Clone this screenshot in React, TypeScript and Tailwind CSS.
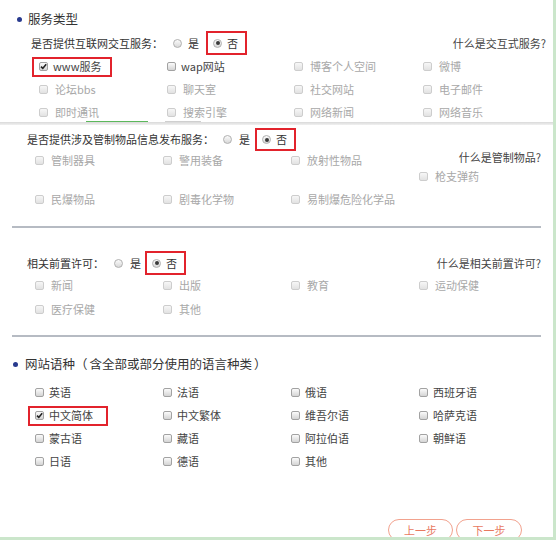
import * as React from "react";

type Item = { label: string; enabled?: boolean; checked?: boolean; boxed?: boolean };

function CheckBox({ enabled, checked }: { enabled?: boolean; checked?: boolean }) {
  return (
    <span
      className={
        enabled
          ? "relative inline-block w-[9px] h-[9px] shrink-0 rounded-[2px] border border-[#a2a2a2] bg-gradient-to-b from-[#fbfbfb] to-[#d4d4d4]"
          : "relative inline-block w-[9px] h-[9px] shrink-0 rounded-[2px] border border-[#cdcdcd] bg-gradient-to-b from-[#f7f7f7] to-[#e2e2e2]"
      }
    >
      {checked && (
        <svg viewBox="0 0 9 9" className="absolute left-[-1px] top-[-1px] w-[9px] h-[9px]">
          <path d="M2 4.6 L3.8 6.4 L7.2 2.2" fill="none" stroke="#222" strokeWidth="1.6" />
        </svg>
      )}
    </span>
  );
}

function Radio({ checked }: { checked?: boolean }) {
  return (
    <span className="relative inline-flex items-center justify-center w-[9px] h-[9px] shrink-0 rounded-full border border-[#b0b0b0] bg-gradient-to-b from-[#fbfbfb] to-[#d8d8d8]">
      {checked && <span className="w-[4px] h-[4px] rounded-full bg-[#3a3a3a]" />}
    </span>
  );
}

function Option({ item }: { item: Item }) {
  const text = (
    <span className={item.enabled ? "ml-[5px] leading-none text-[#444]" : "ml-[7px] leading-none text-[#a8a8a8]"}>
      {item.label}
    </span>
  );
  if (item.boxed) {
    return (
      <div className="-ml-[7px] flex items-center h-[20px] w-[80px] pl-[5px] border-2 border-[#e2232c]">
        <CheckBox enabled={item.enabled} checked={item.checked} />
        {text}
      </div>
    );
  }
  return (
    <div className="flex items-center">
      <CheckBox enabled={item.enabled} checked={item.checked} />
      {text}
    </div>
  );
}

function YesNo({ gapA, gapB }: { gapA: string; gapB: string }) {
  return (
    <>
      <Radio />
      <span className={gapA + " leading-none"}>是</span>
      <div className={gapB + " flex items-center h-full w-[41px] pl-[5px] border-2 border-[#e2232c]"}>
        <Radio checked />
        <span className="ml-[5px] leading-none">否</span>
      </div>
    </>
  );
}

const dis = (label: string): Item => ({ label });
const en = (label: string): Item => ({ label, enabled: true });

const serviceRows: Item[][] = [
  [{ label: "www服务", enabled: true, checked: true, boxed: true }, en("wap网站"), dis("博客个人空间"), dis("微博")],
  [dis("论坛bbs"), dis("聊天室"), dis("社交网站"), dis("电子邮件")],
  [dis("即时通讯"), dis("搜索引擎"), dis("网络新闻"), dis("网络音乐")],
];

const langRows: Item[][] = [
  [en("英语"), en("法语"), en("俄语"), en("西班牙语")],
  [{ label: "中文简体", enabled: true, checked: true, boxed: true }, en("中文繁体"), en("维吾尔语"), en("哈萨克语")],
  [en("蒙古语"), en("藏语"), en("阿拉伯语"), en("朝鲜语")],
  [en("日语"), en("德语"), en("其他")],
];

export default function App() {
  return (
    <div
      className="w-[556px] h-[540px] overflow-hidden bg-white border-r-[3px] border-b-[3px] border-[#cbe6cb] text-[11px] text-[#333] [text-spacing-trim:space-all]"
      style={{ fontFamily: '"Noto Sans CJK SC", "Noto Sans", sans-serif' }}
    >
      {/* 服务类型 */}
      <div className="h-[121px] pt-[9px]">
        <div className="h-[20px] flex items-center pl-[17px]">
          <span className="w-[5px] h-[5px] rounded-full bg-[#283a8e]" />
          <span className="ml-[6px] text-[12.5px] leading-none">服务类型</span>
        </div>
        <div className="mt-[2px] h-[24px] flex items-center pl-[31px] pr-[7px]">
          <span className="leading-none">是否提供互联网交互服务：</span>
          <span className="ml-[10px] flex items-center h-full">
            <YesNo gapA="ml-[6px]" gapB="ml-[7px]" />
          </span>
          <span className="ml-auto leading-none text-[#444]">什么是交互式服务?</span>
        </div>
        <div className="pl-[39px]">
          {serviceRows.map((row, i) => (
            <div key={i} className="grid grid-cols-[128px_127px_129px_1fr] h-[23px] items-center">
              {row.map((it) => (
                <Option key={it.label} item={it} />
              ))}
            </div>
          ))}
        </div>
      </div>

      {/* strip */}
      <div className="h-[1px] flex">
        <span className="ml-[86px] w-[62px] bg-[#5cb85c]" />
        <span className="ml-[17px] w-[36px] bg-[#cfcfcf]" />
      </div>
      <div className="h-[3px] bg-gradient-to-b from-[#d9d9d9] to-[#f1f1f1]" />

      {/* 管制物品 */}
      <div className="mt-[3px] h-[23px] flex items-center pl-[27px]">
        <span className="leading-none">是否提供涉及管制物品信息发布服务：</span>
        <span className="ml-[9px] flex items-center h-full">
          <YesNo gapA="ml-[7px]" gapB="ml-[5px]" />
        </span>
      </div>
      <div className="flex pl-[35px]">
        <div className="w-[384px]">
          <div className="grid grid-cols-[128px_128px_128px] h-[18px] items-center">
            <Option item={dis("管制器具")} />
            <Option item={dis("警用装备")} />
            <Option item={dis("放射性物品")} />
          </div>
          <div className="mt-[21px] grid grid-cols-[128px_128px_128px] h-[18px] items-center">
            <Option item={dis("民爆物品")} />
            <Option item={dis("剧毒化学物")} />
            <Option item={dis("易制爆危险化学品")} />
          </div>
        </div>
        <div className="w-[122px] -mt-[3px]">
          <div className="h-[18px] flex items-center justify-end">
            <span className="leading-none text-[#444]">什么是管制物品?</span>
          </div>
          <div className="mt-[1px] h-[18px] flex items-center">
            <Option item={dis("枪支弹药")} />
          </div>
        </div>
      </div>
      <div className="mt-[18px] ml-[12px] w-[529px] h-[2px] bg-[#b6bbc3]" />

      {/* 前置许可 */}
      <div className="mt-[23px] h-[24px] flex items-center pl-[27px] pr-[12px]">
        <span className="leading-none">相关前置许可：</span>
        <span className="ml-[10px] flex items-center h-full">
          <YesNo gapA="ml-[7px]" gapB="ml-[4px]" />
        </span>
        <span className="ml-auto leading-none text-[#444]">什么是相关前置许可?</span>
      </div>
      <div className="pl-[35px]">
        <div className="grid grid-cols-[128px_128px_128px_1fr] h-[20px] items-center">
          <Option item={dis("新闻")} />
          <Option item={dis("出版")} />
          <Option item={dis("教育")} />
          <Option item={dis("运动保健")} />
        </div>
        <div className="mt-[4px] grid grid-cols-[128px_128px_128px_1fr] h-[20px] items-center">
          <Option item={dis("医疗保健")} />
          <Option item={dis("其他")} />
        </div>
      </div>
      <div className="mt-[16px] ml-[12px] w-[529px] h-[2px] bg-[#b6bbc3]" />

      {/* 网站语种 */}
      <div className="mt-[17px] h-[20px] flex items-center pl-[13px]">
        <span className="w-[5px] h-[5px] rounded-full bg-[#283a8e]" />
        <span className="ml-[7px] text-[12.5px] leading-none">
          网站语种<span className="mr-[2px]">（</span>含全部或部分使用的语言种类<span className="ml-[2px]">）</span>
        </span>
      </div>
      <div className="mt-[7px] pl-[35px] text-[#555]">
        {langRows.map((row, i) => (
          <div key={i} className="grid grid-cols-[128px_128px_128px_1fr] h-[23px] items-center">
            {row.map((it) => (
              <Option key={it.label} item={it} />
            ))}
          </div>
        ))}
      </div>

      <div className="mt-[46px] flex pl-[388px] gap-[3px]">
        <button className="w-[65px] h-[22px] rounded-full border border-[#f2a28e] text-[#e8795f] text-[11px] leading-none">
          上一步
        </button>
        <button className="w-[66px] h-[22px] rounded-full border border-[#f2a28e] text-[#e8795f] text-[11px] leading-none">
          下一步
        </button>
      </div>
    </div>
  );
}
